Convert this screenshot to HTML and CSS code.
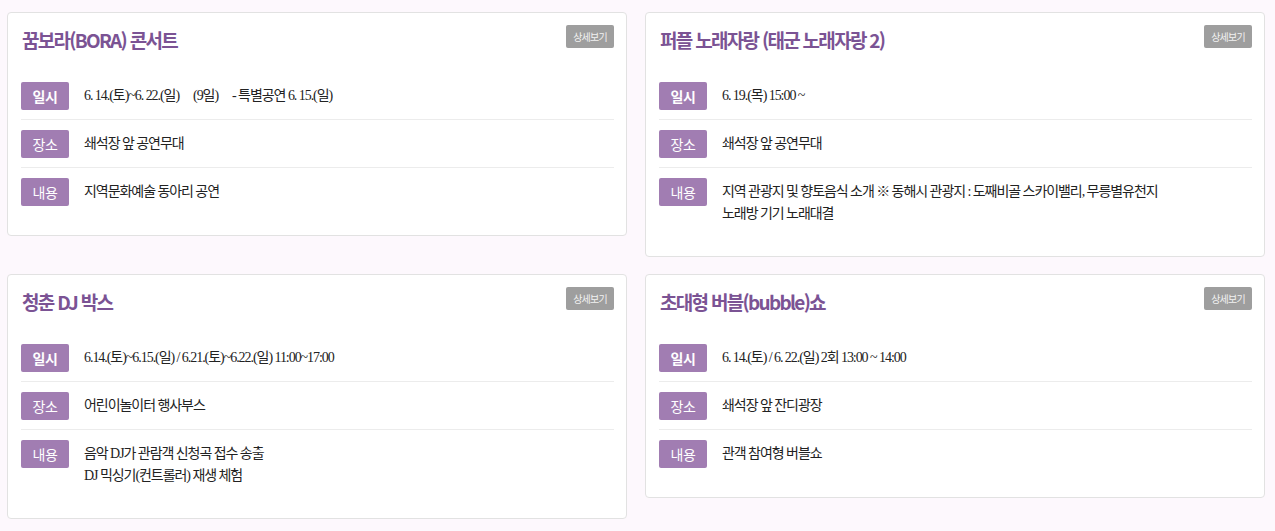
FILE: index.html
```html
<!DOCTYPE html>
<html lang="ko">
<head>
<meta charset="utf-8">
<title>프로그램</title>
<link rel="stylesheet" href="styles.css">
</head>
<body>
<div class="grid">
  <div class="card">
    <div class="head">
      <h3 class="title">꿈보라(BORA) 콘서트</h3>
      <a class="more">상세보기</a>
    </div>
    <ul class="rows">
      <li class="row"><span class="label">일시</span><p class="text">6. 14.(토)~6. 22.(일)<span class="gap"></span>(9일)<span class="gap"></span>- 특별공연 6. 15.(일)</p></li>
      <li class="row"><span class="label">장소</span><p class="text">쇄석장 앞 공연무대</p></li>
      <li class="row"><span class="label">내용</span><p class="text">지역문화예술 동아리 공연</p></li>
    </ul>
  </div>
  <div class="card">
    <div class="head">
      <h3 class="title">퍼플 노래자랑 (태군 노래자랑 2)</h3>
      <a class="more">상세보기</a>
    </div>
    <ul class="rows">
      <li class="row"><span class="label">일시</span><p class="text">6. 19.(목) 15:00 ~</p></li>
      <li class="row"><span class="label">장소</span><p class="text">쇄석장 앞 공연무대</p></li>
      <li class="row"><span class="label">내용</span><p class="text">지역 관광지 및 향토음식 소개 ※ 동해시 관광지 : 도째비골 스카이밸리, 무릉별유천지<br>노래방 기기 노래대결</p></li>
    </ul>
  </div>
  <div class="card">
    <div class="head">
      <h3 class="title">청춘 DJ 박스</h3>
      <a class="more">상세보기</a>
    </div>
    <ul class="rows">
      <li class="row"><span class="label">일시</span><p class="text">6.14.(토)~6.15.(일) / 6.21.(토)~6.22.(일) 11:00~17:00</p></li>
      <li class="row"><span class="label">장소</span><p class="text">어린이놀이터 행사부스</p></li>
      <li class="row"><span class="label">내용</span><p class="text">음악 DJ가 관람객 신청곡 접수 송출<br>DJ 믹싱기(컨트롤러) 재생 체험</p></li>
    </ul>
  </div>
  <div class="card">
    <div class="head">
      <h3 class="title">초대형 버블(bubble)쇼</h3>
      <a class="more">상세보기</a>
    </div>
    <ul class="rows">
      <li class="row"><span class="label">일시</span><p class="text">6. 14.(토) / 6. 22.(일) 2회 13:00 ~ 14:00</p></li>
      <li class="row"><span class="label">장소</span><p class="text">쇄석장 앞 잔디광장</p></li>
      <li class="row"><span class="label">내용</span><p class="text">관객 참여형 버블쇼</p></li>
    </ul>
  </div>
</div>
</body>
</html>
```
FILE: styles.css
```css
* { box-sizing: border-box; }
html, body { margin: 0; padding: 0; }
body {
  background: #fdf8fd;
  font-family: "Liberation Serif", "Noto Sans CJK KR", serif;
  color: #222;
}
.grid {
  display: grid;
  grid-template-columns: 620px 620px;
  column-gap: 18px;
  row-gap: 17px;
  align-items: start;
  padding: 12px 0 0 7px;
}
.card {
  background: #fff;
  border: 1px solid #e2e2e2;
  border-radius: 4px;
  padding: 12px 12px 20px 13px;
}
.head {
  display: flex;
  justify-content: space-between;
  align-items: flex-start;
  height: 30px;
}
.title {
  margin: 0;
  padding-left: 1px;
  font-family: "Noto Sans CJK KR", sans-serif;
  font-size: 19px;
  font-weight: 700;
  line-height: 30px;
  letter-spacing: -1.7px;
  color: #7b5394;
}
.more {
  display: block;
  width: 48px;
  height: 23px;
  line-height: 23px;
  text-align: center;
  background: #9e9e9e;
  color: #f2f2f2;
  font-family: "Noto Sans CJK KR", sans-serif;
  font-size: 10px;
  letter-spacing: -0.8px;
  border-radius: 2px;
}
.rows {
  list-style: none;
  margin: 17px 0 0;
  padding: 0;
}
.row {
  display: flex;
  align-items: flex-start;
  padding: 10px 0 9px;
  border-bottom: 1px solid #ececec;
}
.row:last-child { border-bottom: none; }
.label {
  flex: none;
  width: 48px;
  height: 28px;
  line-height: 28px;
  text-align: center;
  background: #a17db2;
  color: #fff;
  border-radius: 2px;
  font-family: "Noto Sans CJK KR", sans-serif;
  font-size: 14px;
  letter-spacing: -0.5px;
}
.row:first-child .label { font-weight: 700; }
.text {
  margin: 0;
  padding: 3px 0 2px 15px;
  font-size: 14px;
  line-height: 22px;
  letter-spacing: -1.05px;
  color: #222;
}
.gap {
  display: inline-block;
  width: 14px;
}
```
